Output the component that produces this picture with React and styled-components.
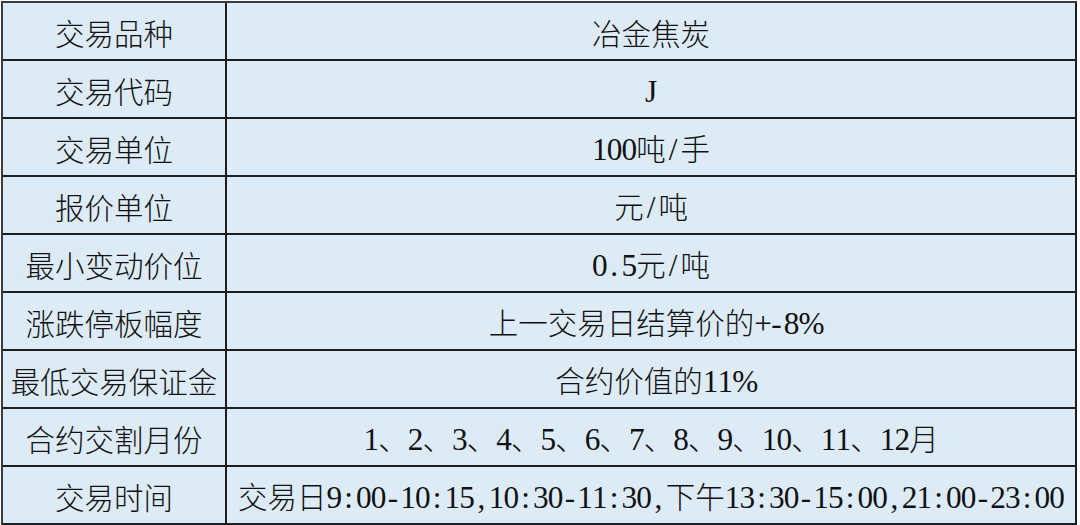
import styled, { createGlobalStyle } from "styled-components";

const rows = [
  ["交易品种", "冶金焦炭"],
  ["交易代码", "J"],
  ["交易单位", "100吨/手"],
  ["报价单位", "元/吨"],
  ["最小变动价位", "0.5元/吨"],
  ["涨跌停板幅度", "上一交易日结算价的+-8%"],
  ["最低交易保证金", "合约价值的11%"],
  ["合约交割月份", "1、2、3、4、5、6、7、8、9、10、11、12月"],
  ["交易时间", "交易日9:00-10:15,10:30-11:30,下午13:30-15:00,21:00-23:00"],
];

// latin characters are laid out half-width, like a Song typeface
function CellText({ text }) {
  return [...text].map((ch, i) =>
    /[\x20-\x7e]/.test(ch) ? <Half key={i}>{ch}</Half> : <Full key={i}>{ch}</Full>
  );
}

export default function App() {
  return (
    <>
      <GlobalStyle />
      <Page>
        <Table>
          <tbody>
            {rows.map(([label, value]) => (
              <tr key={label}>
                <Label>
                  <CellText text={label} />
                </Label>
                <Value>
                  <CellText text={value} />
                </Value>
              </tr>
            ))}
          </tbody>
        </Table>
      </Page>
    </>
  );
}

const GlobalStyle = createGlobalStyle`
  html, body {
    margin: 0;
    background: #ffffff;
    overflow: hidden;
  }
`;

const Page = styled.main`
  width: 1080px;
  height: 525px;
  padding: 1px 0 0 1px;
  box-sizing: border-box;
  overflow: hidden;
`;

const Table = styled.table`
  width: 1076px;
  border-collapse: separate;
  border-spacing: 0;
  table-layout: fixed;
  border-top: 2px solid #3a3a3a;
  border-left: 2px solid #3a3a3a;
  background: #ddebf7;
  font-family: "Noto Sans CJK SC", sans-serif;
  font-weight: 300;
  font-size: 29.5px;
  color: #111;
`;

const Cell = styled.td`
  height: 58px;
  padding: 4px 0 0;
  text-align: center;
  vertical-align: middle;
  white-space: nowrap;
  border-right: 2px solid #1e1e1e;
  border-bottom: 2px solid #1e1e1e;
  line-height: 1;
  box-sizing: border-box;
`;

const Label = styled(Cell)`
  width: 224px;
`;

const Value = styled(Cell)``;

const Full = styled.span`
  display: inline-block;
  width: 1em;
`;

const Half = styled.span`
  display: inline-block;
  width: 14.75px;
  text-align: center;
  font-family: "Liberation Serif", serif;
  font-weight: 400;
  font-size: 1.06em;
`;
